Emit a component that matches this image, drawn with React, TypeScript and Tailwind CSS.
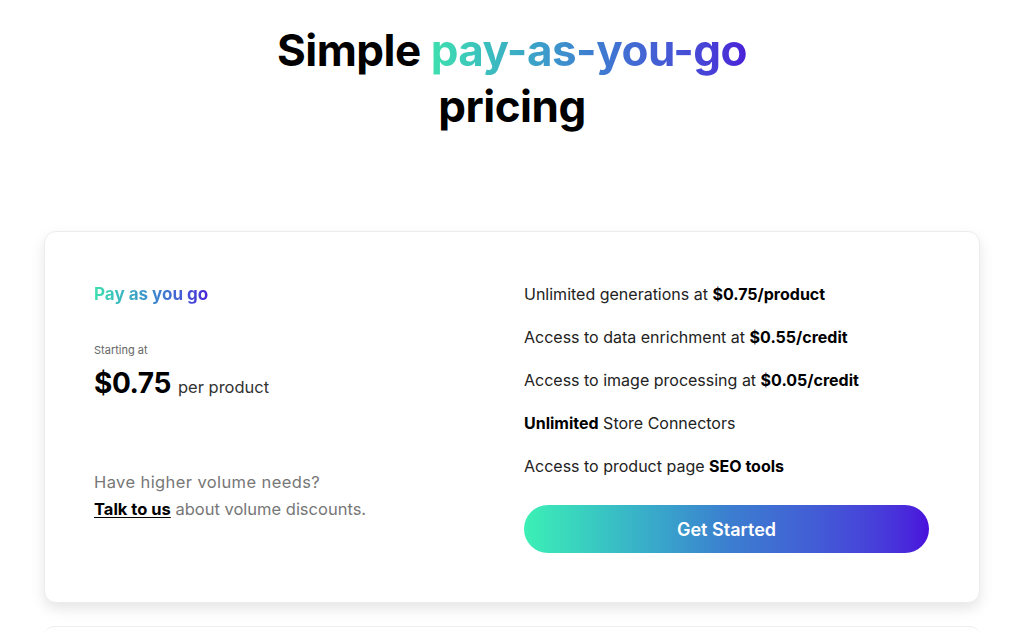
export default function App() {
  const features = [
    { pre: "Unlimited generations at ", bold: "$0.75/product", post: "" },
    { pre: "Access to data enrichment at ", bold: "$0.55/credit", post: "" },
    { pre: "Access to image processing at ", bold: "$0.05/credit", post: "" },
    { pre: "", bold: "Unlimited", post: " Store Connectors" },
    { pre: "Access to product page ", bold: "SEO tools", post: "" },
  ];
  return (
    <div className="min-h-[633px] bg-white font-['Inter',sans-serif] text-[#111]">
      <h1 className="pt-[22px] text-center text-[44px] font-bold leading-[56px] tracking-[-0.5px] text-black">
        Simple{" "}
        <span className="bg-gradient-to-r from-[#3ee0ae] via-[#3e7fd0] to-[#4a1fd8] bg-clip-text text-transparent">
          pay-as-you-go
        </span>
        <br />
        pricing
      </h1>

      <div className="mx-[44px] mt-[97px] flex h-[372px] rounded-[12px] border border-[#ececec] bg-white shadow-[0_6px_14px_rgba(0,0,0,0.10)]">
        <div className="flex w-[479px] flex-col pl-[49px] pt-[50px]">
          <div className="w-fit bg-gradient-to-r from-[#3ee0ae] via-[#3b8ccc] to-[#4a1fd8] bg-clip-text text-[17px] font-bold text-transparent">
            Pay as you go
          </div>
          <div className="mt-[34px] text-[11px] text-[#666]">Starting at</div>
          <div className="mt-[7px] flex items-baseline gap-[7px]">
            <span className="text-[28px] font-bold leading-[36px] tracking-[-0.4px] text-black">$0.75</span>
            <span className="text-[16.5px] text-[#333]">per product</span>
          </div>
          <div className="mt-[68px] text-[16.5px] leading-[27px] text-[#777]">
            <div className="tracking-[0.4px]">Have higher volume needs?</div>
            <div>
              <a className="font-bold text-black underline underline-offset-2">Talk to us</a> about volume discounts.
            </div>
          </div>
        </div>
        <div className="flex flex-1 flex-col pt-[51px]">
          <ul className="flex flex-col gap-[21px] text-[16px] leading-[22px] text-[#222]">
            {features.map((f) => (
              <li key={f.bold}>
                {f.pre}
                <b className="font-bold text-black">{f.bold}</b>
                {f.post}
              </li>
            ))}
          </ul>
          <button className="mt-[28px] h-[48px] w-[405px] rounded-full bg-gradient-to-r from-[#3cf0b4] via-[#3b7fcf] to-[#4a0edc] text-[18px] font-semibold text-white">
            Get Started
          </button>
        </div>
      </div>
      <div className="mx-[44px] mt-[23px] h-[10px] rounded-t-[12px] border-t border-[#eeeeee]" />
    </div>
  );
}
